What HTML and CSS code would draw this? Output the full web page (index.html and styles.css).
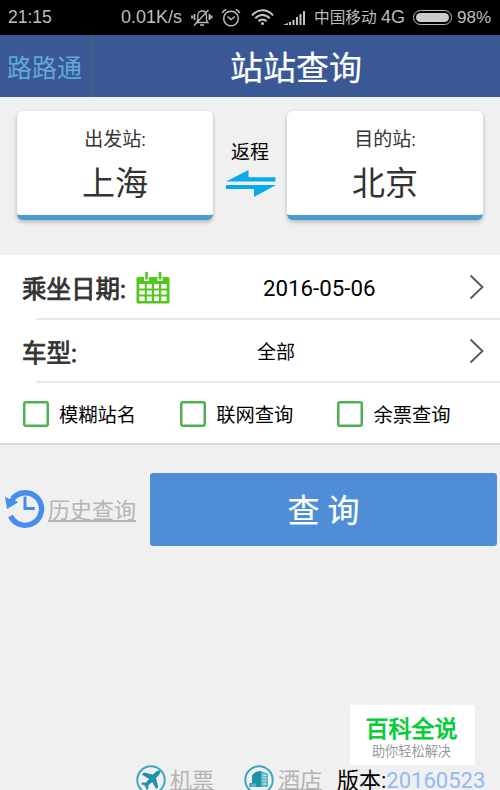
FILE: index.html
```
<!DOCTYPE html>
<html lang="zh-CN">
<head>
<meta charset="utf-8">
<title>站站查询</title>
<link rel="stylesheet" href="styles.css">
</head>
<body>
<div class="app">
  <div class="status">
    <span class="clock">21:15</span>
    <span class="speed">0.01K/s</span>
    <svg class="mute" width="22" height="20" viewBox="0 0 22 20" fill="none" stroke="#bdbdbd" stroke-width="1.3">
      <path d="M5.5 14.5h11.5l-1.500-2.500V8c0-3-1.800-5-4.500-5S6.800 5 6.800 8v4zM9 17h4M3 17.500L17.500 2"/><path d="M3.500 6v6M1 7.500v3M18.500 6v6M20.500 7.500v3" stroke-width="1.800"/>
    </svg>
    <svg class="alarm" width="20" height="20" viewBox="0 0 20 20" fill="none" stroke="#bdbdbd" stroke-width="1.5">
      <circle cx="10" cy="10.500" r="7.300"/><path d="M6.500 8.500l3.500 3 4-3M1.200 5C2 3.300 3.500 2 5.200 1.500M18.800 5C18 3.300 16.500 2 14.800 1.500"/>
    </svg>
    <svg class="wifi" width="23" height="17" viewBox="0 0 23 17" fill="none" stroke="#c6c6c6" stroke-width="2">
      <path d="M1 6.300C7-.3 16-.3 22 6.300M4.300 9.300c4-4.500 10.400-4.500 14.400 0M7.500 12.300c2.300-2.500 5.700-2.500 8 0"/><circle cx="11.500" cy="14.500" r="1.500" fill="#c6c6c6" stroke="none"/>
    </svg>
    <svg class="signal" width="22" height="16" viewBox="0 0 22 16" fill="#c6c6c6">
      <path d="M0 15l5-2v2zM6 12h2v3H6zM9.500 10h2v5h-2zM13 7h2v8h-2zM16.500 4h2v11h-2zM20 1h2v14h-2z"/>
    </svg>
    <span class="carrier">中国移动</span>
    <span class="net">4G</span>
    <span class="battery"><span class="charge"></span></span>
    <span class="percent">98%</span>
  </div>

  <header class="header">
    <span class="brand">路路通</span>
    <h1 class="title">站站查询</h1>
  </header>

  <section class="stations">
    <div class="card"><span class="card-label">出发站:</span><span class="city">上海</span></div>
    <div class="swap">
      <span>返程</span>
      <svg width="50" height="27" viewBox="0 0 50 27" fill="#08a9ee"><path d="M0 11.500L22.500 0v7.300H49.500v4.200zM0 15h50L28 27v-8H0z"/></svg>
    </div>
    <div class="card"><span class="card-label">目的站:</span><span class="city">北京</span></div>
  </section>

  <section class="panel">
    <div class="row">
      <span class="row-label">乘坐日期:</span>
      <svg class="calendar" width="34" height="33" viewBox="0 0 34 33">
        <rect x=".5" y="6" width="33" height="26.500" rx="1.500" fill="#52c81c"/>
        <path d="M8 4h5v6H8zM21.500 4h5v6h-5z" fill="#fff"/>
        <path d="M9.200 1h2.600v7.500H9.200zM22.700 1h2.600v7.500h-2.600z" fill="#52c81c"/>
        <path d="M3.200 13h5.500v4.500H3.200zM10.800 13h5v4.500h-5zM18 13h5v4.500h-5zM25.200 13h5.500v4.500h-5.500zM3.200 19.500h5.500v4H3.200zM10.800 19.500h5v4h-5zM18 19.500h5v4h-5zM25.200 19.500h5.500v4h-5.500zM3.200 25.500h5.500V30H3.200zM10.800 25.500h5V30h-5zM18 25.500h5V30h-5zM25.200 25.500h5.500V30h-5.500z" fill="#fff"/>
      </svg>
      <span class="date">2016-05-06</span>
      <svg class="chevron" width="16" height="26" viewBox="0 0 16 26" fill="none" stroke="#555" stroke-width="1.800"><path d="M1.500 1.500L13.500 13l-12 11.500"/></svg>
    </div>
    <div class="line"></div>
    <div class="row">
      <span class="row-label">车型:</span>
      <span class="type">全部</span>
      <svg class="chevron" width="16" height="26" viewBox="0 0 16 26" fill="none" stroke="#555" stroke-width="1.800"><path d="M1.500 1.500L13.500 13l-12 11.500"/></svg>
    </div>
    <div class="line"></div>
    <div class="checks">
      <label class="check"><span class="box"></span>模糊站名</label>
      <label class="check"><span class="box"></span>联网查询</label>
      <label class="check"><span class="box"></span>余票查询</label>
    </div>
  </section>

  <section class="actions">
    <svg class="history-icon" width="40" height="40" viewBox="0 0 40 40" fill="none" stroke="#478df0">
      <path d="M7.500 9.800A16.300 16.300 0 1 1 5.500 27" stroke-width="5.400"/>
      <path d="M0 7.500l4 2.500 3-1.500L13 13.500 2 20z" fill="#478df0" stroke="none"/>
      <path d="M20 7.500V19.500h9.800" stroke-width="3"/>
    </svg>
    <a class="history">历史查询</a>
    <button class="search">查 询</button>
  </section>

  <footer class="footer">
    <svg class="foot-icon" width="30" height="30" viewBox="0 0 30 30">
      <circle cx="15" cy="15" r="13.700" fill="none" stroke="#3ba8bb" stroke-width="2"/>
      <path d="M24 6c-1-1-3.500 0-5 1.500L17 9.500 8 7.500 5.800 9.500l7.400 4.500-3.500 3.800-3.200-.5L5 19l4 1.700 1.700 4.300 1.700-1.600-.2-3 4-3.400 4 7 2-2-2.200-9 2-2C23.500 9.500 24.800 7 24 6z" fill="#1d92ab"/>
    </svg>
    <a class="foot-link">机票</a>
    <svg class="foot-icon hotel" width="30" height="30" viewBox="0 0 30 30">
      <circle cx="15" cy="15" r="13.700" fill="none" stroke="#3ba8bb" stroke-width="2"/>
      <path d="M8 10.500c2-3 5-4.500 9-4.500V22H5.500v-4H8z" fill="#1d92ab"/><path d="M17 6l7 2.500V22h-7z" fill="#58b7c6"/>
      <path d="M18.500 10l4 .5M18.500 13h4M18.500 16h4M18.500 19h4" stroke="#eee" stroke-width="1.200"/><path d="M7 18.500h5V22H7z" fill="#58b7c6"/>
    </svg>
    <a class="foot-link">酒店</a>
    <span class="version">版本:<span class="number">20160523</span></span>
  </footer>

  <aside class="stamp"><strong class="stamp-name">百科全说</strong><span class="stamp-sub">助你轻松解决</span></aside>
</div>
</body>
</html>
```
FILE: styles.css
```
* { box-sizing: border-box; }
body { margin: 0; overflow: hidden; background: #f0f0f0; font-family: Roboto, "Noto Sans CJK SC", sans-serif; }
svg { display: block; flex: none; }
.app { position: relative; width: 500px; height: 790px; overflow: hidden; white-space: nowrap; }

.status { display: flex; align-items: center; height: 35px; padding-left: 8px; background: #000; color: #bdbdbd; font: 17.500px/37px "Liberation Sans", "Noto Sans CJK SC", sans-serif; }
.status span { flex: none; }
.clock { width: 113px; }
.speed { width: 70px; font-size: 18px; }
.mute { margin-right: 8px; }
.alarm { margin-right: 10px; }
.wifi { margin-right: 9px; }
.signal { margin-right: 9px; }
.carrier { width: 67px; font-size: 15.700px; }
.net { width: 32px; font-size: 18px; }
.battery { width: 39px; height: 15px; padding: 2px; border: 1px solid #bdbdbd; border-radius: 8px; }
.charge { display: block; height: 100%; border-radius: 5px; background: #ccc; }
.percent { margin-left: 5px; font-size: 17px; }

.header { display: flex; height: 62px; background: #3a5994; line-height: 67px; }
.brand { width: 93px; padding-left: 7px; border-right: 1px solid #56606f; color: #62a8da; font-size: 25px; }
.title { margin: 0; padding-left: 137px; color: #fff; font-size: 33px; font-weight: 400; -webkit-text-stroke: .2px #fff; }

.stations { display: flex; height: 158px; padding: 14px 17px 0; }
.card { display: flex; flex-direction: column; align-items: center; width: 196px; height: 109px; padding-top: 14px; border-bottom: 5px solid #489bd3; border-radius: 6px; background: #fff; box-shadow: 0 2px 4px rgba(0, 0, 0, .25); color: #333; }
.card-label { font-size: 19px; line-height: 30px; }
.city { font-size: 33px; line-height: 58px; }
.swap { display: flex; flex-direction: column; align-items: center; width: 74px; padding-top: 27px; font-size: 19px; line-height: 30px; }
.swap svg { margin: 2px 0 0 1px; }

.panel { height: 190px; border-bottom: 2px solid #d7d7d7; background: #fff; }
.row { display: flex; align-items: center; height: 63px; padding-left: 22px; }
.row-label { width: 114px; padding-top: 1px; color: #333; font-size: 24.500px; -webkit-text-stroke: .8px #333; }
.calendar { margin: 2px 93px 0 0; }
.date { width: 206px; padding-top: 3px; font-size: 22.300px; }
.type { width: 212px; margin-left: 121px; font-size: 19px; }
.line { height: 2px; margin-left: 36px; background: #e7e7e7; }
.line + .row { height: 61px; }
.checks { display: flex; height: 60px; padding: 1px 0 0 23px; }
.check { display: flex; align-items: center; gap: 10px; width: 157.200px; font-size: 19.300px; }
.box { width: 26px; height: 26px; border: 2px solid #4caf50; border-radius: 3px; box-shadow: inset 0 0 0 .5px #4caf50; }

.actions { display: flex; height: 103px; padding: 28px 3px 0 5px; }
.history-icon { flex: none; margin-top: 16px; }
.history { flex: none; width: 102px; margin: 22px 0 0 3px; color: #b5b5b5; font-size: 22px; line-height: 32px; text-decoration: underline; }
.search { width: 347px; height: 73px; padding: 3px 0 0; border: 0; border-radius: 3px; background: #4f8ed6; color: #fff; font: 400 32px/70px Roboto, "Noto Sans CJK SC", sans-serif; -webkit-text-stroke: .2px #fff; }

.footer { display: flex; height: 26px; margin-top: 216px; padding-left: 136px; font-size: 22px; line-height: 33px; }
.foot-icon { margin-top: 1px; }
.hotel { margin-left: 29px; }
.foot-link { width: 45px; margin-left: 4px; color: #b3b3b3; text-decoration: underline; text-underline-offset: 1px; }
.version { margin-left: 14px; }
.number { color: #90bbf2; }

.stamp { position: absolute; top: 705px; left: 350px; display: flex; flex-direction: column; align-items: center; width: 125px; height: 60px; padding: 9px 2px 0 0; background: #fff; }
.stamp-name { color: #00cc34; font-size: 23px; font-weight: 400; line-height: 31px; -webkit-text-stroke: .8px #00cc34; }
.stamp-sub { color: #999; font-size: 13.200px; line-height: 13px; }
```
